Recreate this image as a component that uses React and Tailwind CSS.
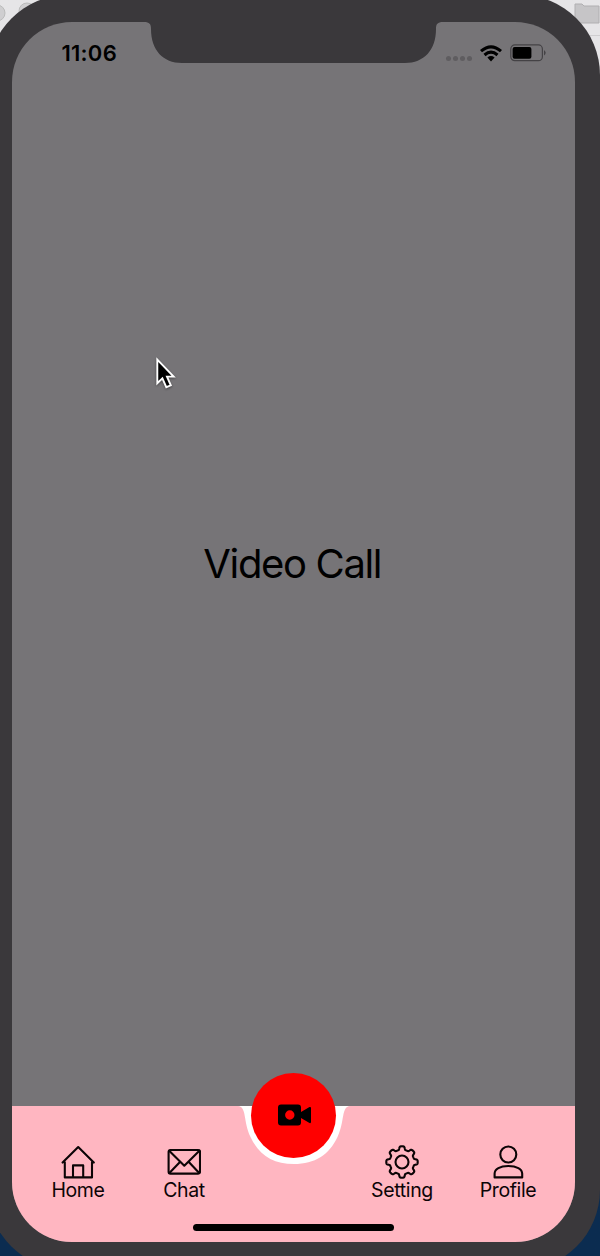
import React from "react";

const gearPath = (() => {
  const pts = [];
  for (let i = 0; i < 240; i++) {
    const a = (i / 240) * Math.PI * 2;
    const r = 14 + 1.7 * (Math.tanh(2.4 * Math.cos(8 * a)) / Math.tanh(2.4));
    pts.push(`${(17 + r * Math.sin(a)).toFixed(2)} ${(17 - r * Math.cos(a)).toFixed(2)}`);
  }
  return `M${pts.join("L")}Z`;
})();

const iconProps = {
  viewBox: "0 0 34 34",
  className: "block h-[34px] w-[34px]",
  fill: "none",
  stroke: "#0c0406",
  strokeWidth: 2.1,
  strokeLinejoin: "round",
  strokeLinecap: "round",
};

const HomeIcon = () => (
  <svg {...iconProps}>
    <path d="M3.8 17.2V32.400H31V17.2M1.6 17.600 17.2 2 32.800 17.600M12 32.400V20.4H22.2V32.400" />
  </svg>
);

const ChatIcon = () => (
  <svg {...iconProps}>
    <rect x="1.6" y="5" width="31.4" height="23.6" rx="1.8" />
    <path d="M2.200 5.700 17.3 20.700 32.4 5.700M2.4 27.900 13.200 16.800M32.200 27.900 21.600 16.800" />
  </svg>
);

const SettingIcon = () => (
  <svg {...iconProps}>
    <path d={gearPath} />
    <circle cx="17" cy="17" r="6.5" />
  </svg>
);

const ProfileIcon = () => (
  <svg {...iconProps}>
    <circle cx="17.3" cy="9.5" r="8" />
    <path d="M3.6 32.400V28.800C3.6 24 9 21 17.3 21S31.200 24 31.200 28.800V32.400Z" />
  </svg>
);

function Tab({ icon, label }) {
  return (
    <button className="flex flex-col items-center pt-[39px] text-[19.5px] leading-[22px] tracking-[-0.35px] text-[#0c0406]">
      {icon}
      <span>{label}</span>
    </button>
  );
}

function StatusBar() {
  return (
    <header className="flex h-[62px] items-center justify-between pl-[50px] pr-[29px]">
      <span className="text-[22px] font-semibold leading-none tracking-[0.25px]">11:06</span>
      <div className="flex items-center">
        <div className="mr-2 mt-[11px] flex gap-[2px]">
          <i className="h-[5px] w-[5px] rounded-full bg-[#5f5d60]" />
          <i className="h-[5px] w-[5px] rounded-full bg-[#5f5d60]" />
          <i className="h-[5px] w-[5px] rounded-full bg-[#5f5d60]" />
          <i className="h-[5px] w-[5px] rounded-full bg-[#5f5d60]" />
        </div>
        <svg className="h-[17px] w-[22px]" viewBox="0 0 22 17" fill="none" stroke="#000" strokeWidth="3.1">
          <path d="M1 6.1Q11 -2.4 21 6.1M4.5 10Q11 4.4 17.5 10" />
          <path d="M7.4 12.4Q11 9.6 14.6 12.4L11 16.4Z" fill="#000" stroke="none" />
        </svg>
        <svg className="ml-2 h-[18px] w-[36px]" viewBox="0 0 36 18">
          <rect x=".8" y=".9" width="31.6" height="15.8" rx="4" fill="none" stroke="#444245" strokeWidth="1.2" />
          <rect x="2.6" y="2.9" width="18.8" height="11.8" rx="2" />
          <path d="M34 6Q37.4 8.8 34 11.6Z" fill="#444245" />
        </svg>
      </div>
    </header>
  );
}

export default function App() {
  return (
    <div className="relative h-[1256px] w-[600px] overflow-hidden bg-linear-to-b from-[#e6e5e7] from-50% to-[#0b2c50] to-50% font-['Inter','Liberation_Sans',sans-serif] text-black">
      <svg className="absolute left-0 top-0 h-[80px] w-[600px]" viewBox="0 0 600 80">
        <circle cx="-3" cy="13" r="8" fill="#cfced0" stroke="#bbb" />
        <circle cx="27" cy="11" r="8" fill="#cfced0" stroke="#bbb" />
        <path d="M575 23V4H582L584 6H599V23Z" fill="#c6c5c7" stroke="#b0afb1" />
        <path d="M585 35.5H600" stroke="#cfced0" />
      </svg>
      <div className="relative -ml-3 h-[1275px] w-[612px] -translate-y-[5px] rounded-[80px] bg-[#3a383b] pl-[23.5px] pt-[27px]">
        <div className="relative flex h-[1220px] w-[563.5px] flex-col overflow-hidden rounded-[60px] bg-[#767477]">
          <svg className="absolute left-[132.5px] top-0 h-[41px] w-[300px]" viewBox="144 22 300 41">
            <path d="M144 22C149.5 22 151 24 151 29C151 50 163 63 182 63H405C424 63 436 50 436 29C436 24 437.500 22 443 22Z" fill="#3a383b" />
          </svg>
          <StatusBar />
          <main className="flex flex-1 items-center justify-center pb-[62px] pr-[2px]">
            <h1 className="text-[40px] leading-none tracking-[-1.35px]">Video Call</h1>
          </main>
          <nav className="relative grid h-[136px] shrink-0 grid-cols-[106px_106px_112px_106px_106px] bg-[#ffb6c1] pl-[13.5px]">
            <svg className="absolute left-[226.500px] top-0 h-[60px] w-[114px]" viewBox="238 1106 114 60">
              <path d="M238 1106C247 1107 243 1121 250.500 1137C259 1155 273 1164 294 1164S329 1155 337.500 1137C345 1121 341 1107 350 1106Z" fill="#fff" />
            </svg>
            <Tab icon={<HomeIcon />} label="Home" />
            <Tab icon={<ChatIcon />} label="Chat" />
            <div className="relative flex justify-center">
              <button className="-mt-[33px] flex h-[85px] w-[85px] items-center justify-center rounded-full bg-[#ff0000] pb-px pl-[3px]">
                <svg className="h-[22px] w-[34px]" viewBox="0 0 34 22">
                  <path
                    fillRule="evenodd"
                    d="M3 .5H20Q23 .5 23 3.500V8L31.500 3Q33 2.500 33 4V18Q33 19.500 31.500 19L23 14V18.500Q23 21.500 20 21.500H3Q0 21.500 0 18.500V3.500Q0 .5 3 .5ZM11.800 6.300A4.700 4.700 0 1 0 11.800 15.700A4.700 4.700 0 1 0 11.800 6.300Z"
                  />
                </svg>
              </button>
            </div>
            <Tab icon={<SettingIcon />} label="Setting" />
            <Tab icon={<ProfileIcon />} label="Profile" />
            <div className="absolute bottom-[11px] left-[181px] h-[7px] w-[201px] rounded-full bg-black" />
          </nav>
        </div>
      </div>
      <svg className="absolute left-[155.5px] top-[357px] h-[34px] w-[22px] drop-shadow-[0_1px_1px_rgba(0,0,0,0.4)]" viewBox="0 0 22 34">
        <path d="M1.300 2.700V26.300L6.400 21.300L10.300 30.200L14.800 28.300L11 19.600H17.600Z" fill="#000" stroke="#fff" strokeWidth="1.900" />
      </svg>
    </div>
  );
}
